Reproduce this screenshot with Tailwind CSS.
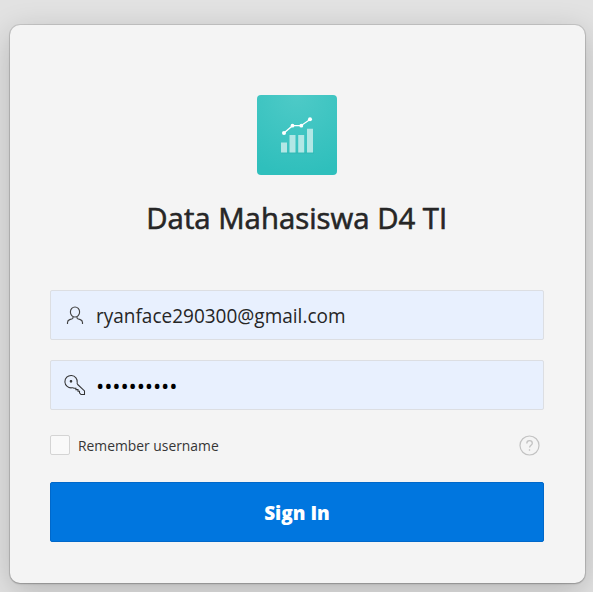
<!DOCTYPE html>
<html lang="id">
<head>
<meta charset="utf-8">
<title>Data Mahasiswa D4 TI</title>
<script src="https://cdn.jsdelivr.net/npm/@tailwindcss/browser@4"></script>
</head>
<body class="h-[592px] w-[593px] overflow-hidden bg-[#e2e2e2] pt-[25px] pl-[10px] font-['Open_Sans','Noto_Sans',sans-serif] text-[#262626]">
<main class="flex h-[558px] w-[575px] flex-col rounded-[10px] bg-[#f4f4f4] pt-[70px] pr-[41px] pl-10 shadow-[0_0_0_1px_rgba(0,0,0,0.1),0_1px_2px_rgba(0,0,0,0.2),0_8px_32px_rgba(0,0,0,0.2)]">
  <svg class="ml-[207px] size-20 shrink-0 rounded" viewBox="0 0 80 80">
    <defs><radialGradient id="tile" cx=".5" cy="0" r="1"><stop offset="0" stop-color="#4ecac7"/><stop offset="1" stop-color="#2fbfbc"/></radialGradient></defs>
    <rect width="80" height="80" fill="url(#tile)"/>
    <path d="M24 58h33" stroke="#27a5a2" stroke-opacity=".4"/>
    <path d="M24 47.500h6v10h-6zM32.500 40h6v17.500h-6zM41.200 40h6v17.500h-6zM50 33.700h6v23.800h-6z" fill="#b2e7e5"/>
    <path d="M27 38l8.500-7.300H44l9-6.200" fill="none" stroke="#fff" stroke-width="1.300"/>
    <g fill="#fff"><circle cx="27" cy="38" r="2"/><circle cx="35.500" cy="30.700" r="1.900"/><circle cx="44.300" cy="30.700" r="1.900"/><circle cx="53" cy="24.300" r="2"/></g>
  </svg>
  <h1 class="mt-[23px] h-10 text-center text-[28.800px] leading-10 font-normal whitespace-nowrap [-webkit-text-stroke:0.6px_#262626]"><span class="inline-block scale-x-[1.018]">Data Mahasiswa D4 TI</span></h1>
  <form class="mt-[52px] flex flex-col">
    <div class="flex h-[50px] items-center rounded-[2px] border border-[#dcdee2] bg-[#e8f0fe] pl-[13px]">
      <svg class="size-[22px] shrink-0" viewBox="0 0 22 22" fill="none" stroke="#444" stroke-width="1.150"><ellipse cx="11" cy="8" rx="4.600" ry="5"/><path d="M3.500 20v-1.400c0-1.600.8-2.500 2.200-3l2.600-.9c.7-.3.9-.8.7-1.800M18.500 20v-1.400c0-1.600-.8-2.500-2.200-3l-2.600-.9c-.7-.3-.9-.8-.7-1.800"/></svg>
      <span class="ml-[10px] inline-block origin-left scale-x-[0.974] pt-[2px] text-[19.500px] leading-7 whitespace-nowrap">ryanface290300@gmail.com</span>
    </div>
    <div class="mt-5 flex h-[50px] items-center rounded-[2px] border border-[#dcdee2] bg-[#e8f0fe] pl-[13px]">
      <svg class="size-[22px] shrink-0" viewBox="0 0 22 22" fill="none" stroke="#333" stroke-width="1.050"><path d="M13.200 8.700A6.200 6.200 0 1 0 8 13.800c1.100-.2 1.700.1 2.200.5h1.700v1.300H14v1.600h1.500v1.700l1.500 1.600h3.500v-3.600l-6.800-6.400c-.6-.6-.7-1.200-.5-1.800z"/><circle cx="7" cy="7.300" r=".8" fill="#111"/></svg>
      <span class="ml-[10px] text-[22px] leading-7 tracking-[-0.140px] text-black">••••••••••</span>
    </div>
    <div class="mt-[25px] flex h-5 items-center pr-1">
      <span class="size-5 rounded-[2px] border border-[#d4d4d4] bg-[#f9f9f9]"></span>
      <span class="ml-[7.500px] inline-block origin-left scale-x-[0.990] pt-[2px] text-[14px] leading-5 whitespace-nowrap text-[#363636]">Remember username</span>
      <svg class="ml-auto size-[21px]" viewBox="0 0 21 21" fill="none" stroke="#c2c2c2"><circle cx="10.500" cy="10.500" r="9.500" stroke-width="1.200"/><path d="M7.800 8.500c0-1.700 1.100-2.800 2.700-2.800s2.800 1 2.800 2.500c0 2-2.700 2.100-2.700 4.300" stroke-width="1.300"/><circle cx="10.500" cy="15" r=".8" fill="#bbb" stroke="none"/></svg>
    </div>
    <button type="button" class="mt-[27px] h-[60px] rounded-[2px] border border-[#0068ca] bg-[#0076df] pt-[2px] text-[19px] font-extrabold text-white"><span class="inline-block">Sign In</span></button>
  </form>
</main>
</body>
</html>
